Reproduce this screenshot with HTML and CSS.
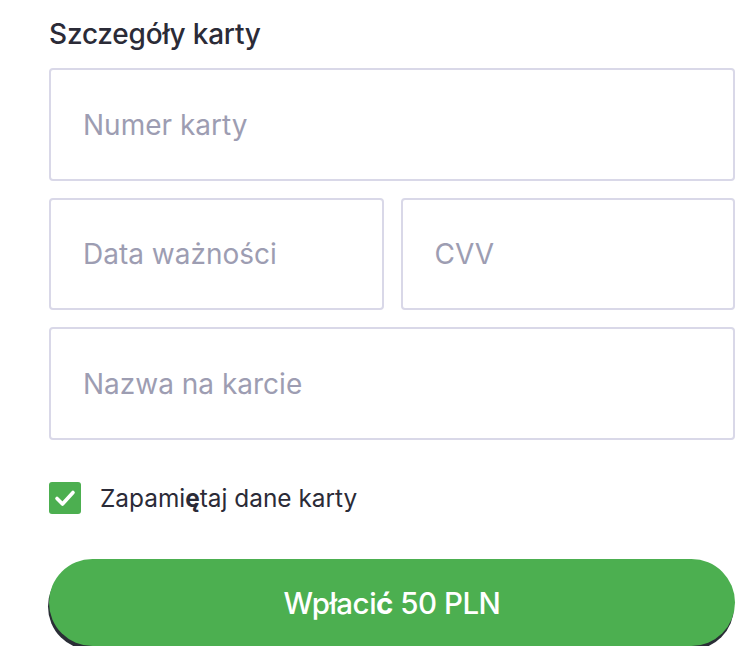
FILE: index.html
```html
<!DOCTYPE html>
<html lang="pl">
<head>
<meta charset="utf-8">
<link rel="stylesheet" href="styles.css">
</head>
<body>
<form class="card-form">
  <h2 class="title">Szczegóły karty</h2>
  <div class="fields">
    <input class="field" type="text" placeholder="Numer karty">
    <div class="row">
      <input class="field" type="text" placeholder="Data ważności">
      <input class="field" type="text" placeholder="CVV">
    </div>
    <input class="field" type="text" placeholder="Nazwa na karcie">
  </div>
  <label class="remember">
    <span class="check">
      <svg width="24" height="24" viewBox="0 0 24 24"><path d="M4 12.5 L9.5 18 L20 6.5" fill="none" stroke="#fff" stroke-width="3.6" stroke-linecap="round" stroke-linejoin="round"/></svg>
    </span>
    <span class="remember-text">Zapami<b class="odd">ę</b>taj dane karty</span>
  </label>
  <button class="pay" type="button">Wpłaci<b class="odd">ć</b> 50 PLN</button>
</form>
</body>
</html>
```
FILE: styles.css
```css
* { box-sizing: border-box; }
html, body { margin: 0; padding: 0; background: #fff; }
body {
  font-family: Inter, "Noto Sans", sans-serif;
  color: #2b2b37;
}
.card-form {
  width: 686px;
  margin-left: 49px;
  padding-top: 14px;
  display: flex;
  flex-direction: column;
}
.title {
  margin: 0;
  font-size: 28px;
  font-weight: 500;
  line-height: 40px;
  letter-spacing: -0.2px;
  color: #2b2b37;
}
.fields {
  margin-top: 14px;
  display: flex;
  flex-direction: column;
  gap: 17px;
}
.row {
  display: grid;
  grid-template-columns: 1fr 1fr;
  gap: 17px;
}
.field {
  width: 100%;
  height: 113px;
  border: 2px solid #d9d8e8;
  border-radius: 4px;
  padding: 0 32px;
  font-family: Inter, "Noto Sans", sans-serif;
  font-size: 28px;
  color: #2b2b37;
  background: #fff;
  outline: none;
}
.row .field { height: 112px; }
.field::placeholder { color: #9d9db2; opacity: 1; }
.remember {
  margin-top: 42px;
  display: flex;
  align-items: center;
  gap: 19px;
  font-size: 24.4px;
  color: #2b2b37;
}
.check {
  width: 32px;
  height: 32px;
  border-radius: 3px;
  background: #4caf50;
  display: flex;
  align-items: center;
  justify-content: center;
}
.odd { font-weight: 700; }
.pay {
  margin-top: 45px;
  height: 87px;
  width: 100%;
  border: 0;
  border-radius: 44px;
  background: #4caf50;
  color: #fff;
  font-family: Inter, "Noto Sans", sans-serif;
  font-size: 29.5px;
  font-weight: 500;
  letter-spacing: -0.5px;
  box-shadow: -1px 4px 0 #2a2e36;
}
```
